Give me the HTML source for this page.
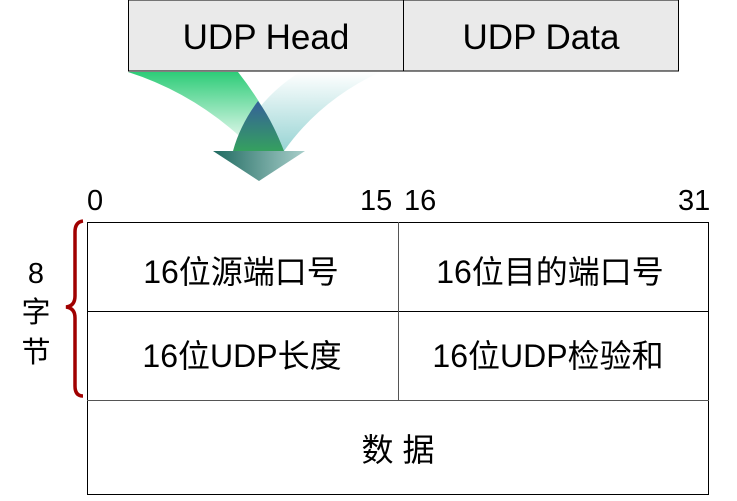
<!DOCTYPE html>
<html><head><meta charset="utf-8"><style>
html,body{margin:0;padding:0;background:#fff;width:737px;height:501px;overflow:hidden}
svg{display:block}
text{font-family:"Liberation Sans","Noto Sans CJK SC",sans-serif;fill:#000}
</style></head><body>
<svg width="737" height="501" viewBox="0 0 737 501">
<defs>
<linearGradient id="gL" x1="0" y1="0" x2="0" y2="1">
<stop offset="0" stop-color="#2ecc78"/><stop offset="1" stop-color="#2ecc78" stop-opacity="0"/></linearGradient>
<linearGradient id="gR" x1="0" y1="0" x2="0" y2="1">
<stop offset="0" stop-color="#8ccfcf" stop-opacity="0"/><stop offset="1" stop-color="#8ccfcf" stop-opacity="0.9"/></linearGradient>
<linearGradient id="gM" x1="0" y1="0" x2="0" y2="1">
<stop offset="0" stop-color="#35609a"/><stop offset="1" stop-color="#35a05f"/></linearGradient>
<linearGradient id="gT" x1="0" y1="0" x2="1" y2="0">
<stop offset="0" stop-color="#1f6a60"/><stop offset="1" stop-color="#a9cfcb"/></linearGradient>
</defs>
<rect x="128.5" y="0" width="550" height="71" fill="#eaeaea" stroke="#000" stroke-width="1"/>
<line x1="403.5" y1="0" x2="403.5" y2="71" stroke="#000"/>
<text x="266" y="49" font-size="35" text-anchor="middle">UDP Head</text>
<text x="541" y="49" font-size="35" text-anchor="middle">UDP Data</text>
<path d="M128,72 L238,72 Q268,110 284,151 L255,151 Q200,95 128,72 Z" fill="url(#gL)"/>
<path d="M380,72 L300,72 Q255,100 234,151 L284,151 Q320,100 380,72 Z" fill="url(#gR)"/>
<path d="M258,101 Q240,125 233,151 L284,151 Q272,120 258,101 Z" fill="url(#gM)"/>
<path d="M213,151 L305,151 L259,181 Z" fill="url(#gT)"/>
<text x="87" y="210" font-size="29">0</text>
<text x="360" y="210" font-size="29">15</text>
<text x="404" y="210" font-size="29">16</text>
<text x="678" y="210" font-size="29">31</text>
<rect x="87.5" y="222.5" width="621" height="272" fill="none" stroke="#000"/>
<line x1="87" y1="311.5" x2="709" y2="311.5" stroke="#000"/>
<line x1="87" y1="400.5" x2="709" y2="400.5" stroke="#555"/>
<line x1="398.5" y1="222" x2="398.5" y2="400" stroke="#555"/>
<text x="241" y="283" font-size="32" text-anchor="middle">16位源端口号</text>
<text x="550" y="283" font-size="32" text-anchor="middle">16位目的端口号</text>
<text x="242" y="367" font-size="32" text-anchor="middle">16位UDP长度</text>
<text x="548" y="367" font-size="32" text-anchor="middle">16位UDP检验和</text>
<text x="398" y="461" font-size="32" text-anchor="middle">数 据</text>
<path d="M83,221 Q75,222 75,232 L75,296 Q75,306 66,307 Q75,308 75,318 L75,386 Q75,396 83,396" fill="none" stroke="#a00000" stroke-width="3.5"/>
<text x="36" y="283" font-size="29" text-anchor="middle">8</text>
<text x="36" y="322" font-size="29" text-anchor="middle">字</text>
<text x="36" y="362" font-size="29" text-anchor="middle">节</text>
</svg>
</body></html>
